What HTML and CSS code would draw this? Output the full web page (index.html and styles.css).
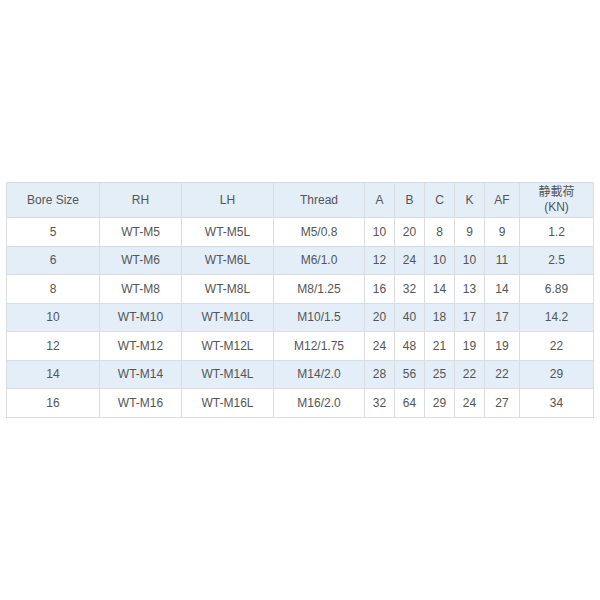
FILE: index.html
```html
<!DOCTYPE html>
<html>
<head>
<meta charset="utf-8">
<link rel="stylesheet" href="styles.css">
</head>
<body>
<div class="wrap">
<table class="spec">
<colgroup>
<col class="c-bore"><col class="c-rh"><col class="c-lh"><col class="c-thread">
<col class="c-s"><col class="c-s"><col class="c-s"><col class="c-s"><col class="c-af"><col class="c-load">
</colgroup>
<thead>
<tr><th>Bore Size</th><th>RH</th><th>LH</th><th>Thread</th><th>A</th><th>B</th><th>C</th><th>K</th><th>AF</th><th>静載荷<br>(KN)</th></tr>
</thead>
<tbody>
<tr><td>5</td><td>WT-M5</td><td>WT-M5L</td><td>M5/0.8</td><td>10</td><td>20</td><td>8</td><td>9</td><td>9</td><td>1.2</td></tr>
<tr><td>6</td><td>WT-M6</td><td>WT-M6L</td><td>M6/1.0</td><td>12</td><td>24</td><td>10</td><td>10</td><td>11</td><td>2.5</td></tr>
<tr><td>8</td><td>WT-M8</td><td>WT-M8L</td><td>M8/1.25</td><td>16</td><td>32</td><td>14</td><td>13</td><td>14</td><td>6.89</td></tr>
<tr><td>10</td><td>WT-M10</td><td>WT-M10L</td><td>M10/1.5</td><td>20</td><td>40</td><td>18</td><td>17</td><td>17</td><td>14.2</td></tr>
<tr><td>12</td><td>WT-M12</td><td>WT-M12L</td><td>M12/1.75</td><td>24</td><td>48</td><td>21</td><td>19</td><td>19</td><td>22</td></tr>
<tr><td>14</td><td>WT-M14</td><td>WT-M14L</td><td>M14/2.0</td><td>28</td><td>56</td><td>25</td><td>22</td><td>22</td><td>29</td></tr>
<tr><td>16</td><td>WT-M16</td><td>WT-M16L</td><td>M16/2.0</td><td>32</td><td>64</td><td>29</td><td>24</td><td>27</td><td>34</td></tr>
</tbody>
</table>
</div>
</body>
</html>
```
FILE: styles.css
```css
html, body { margin: 0; padding: 0; background: #fff; }
.wrap { padding: 182px 0 0 6px; }
.spec {
  border-collapse: collapse;
  table-layout: fixed;
  width: 588px;
  font-family: "Liberation Sans", Arial, "Noto Sans CJK JP", sans-serif;
  font-size: 12px;
  color: #555;
}
.spec th, .spec td {
  border: 1px solid #d9dde2;
  text-align: center;
  padding: 0;
  font-weight: normal;
}
.spec th { height: 34px; line-height: 15px; background: #e3eef9; }
.spec td { height: 27.5px; }
.spec tbody tr:nth-child(even) td { background: #e3eef9; }
.c-bore { width: 93px; }
.c-rh { width: 82px; }
.c-lh { width: 92px; }
.c-thread { width: 91px; }
.c-s { width: 30px; }
.c-af { width: 35px; }
.c-load { width: 74px; }
```
